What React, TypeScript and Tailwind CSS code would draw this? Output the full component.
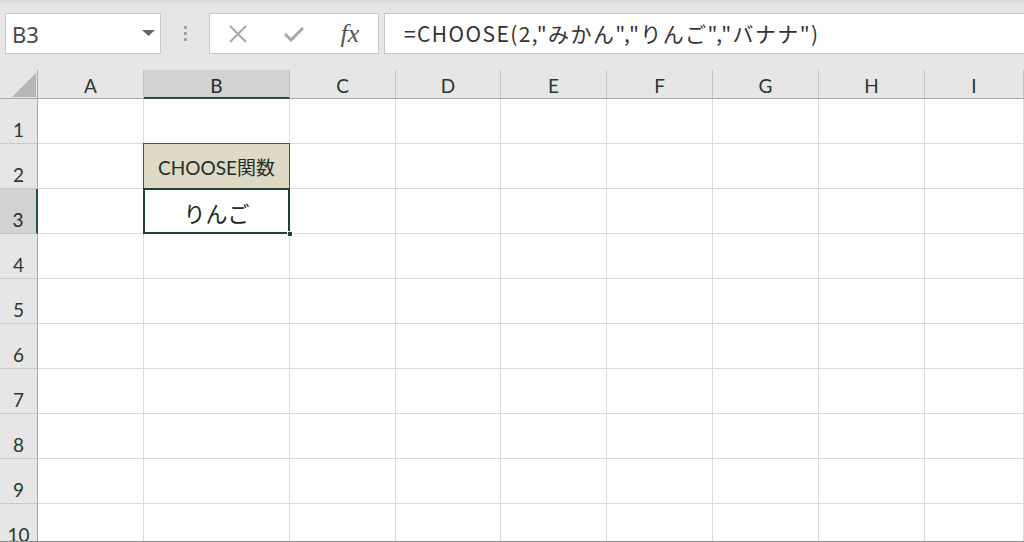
import React from "react";

const columns = ["A", "B", "C", "D", "E", "F", "G", "H", "I"];
const rows = [1, 2, 3, 4, 5, 6, 7, 8, 9, 10];

const uiFont = { fontFamily: '"Lato", "Noto Sans CJK JP", sans-serif' };
const jpFont = { fontFamily: '"Noto Sans CJK JP", sans-serif' };

function ColumnHeader({ label }: { label: string }) {
  const selected = label === "B";
  return (
    <div
      className={
        selected
          ? "flex h-[29px] items-center justify-center border-r border-r-[#bdbdbd] border-b-2 border-b-[#21553a] bg-[#d2d2d2] pt-[5px] text-[19px] text-[#1e2e26]"
          : "flex h-[29px] items-center justify-center border-r border-r-[#c4c4c4] border-b border-b-[#a9a9a9] bg-[#e6e6e6] pt-[4px] text-[19px] text-[#2a3630]"
      }
    >
      {label}
    </div>
  );
}

function RowHeader({ n }: { n: number }) {
  const selected = n === 3;
  return (
    <div
      className={
        selected
          ? "flex h-[45px] items-end justify-center border-r-2 border-r-[#21553a] border-b border-b-[#bdbdbd] bg-[#d2d2d2] text-[19px] leading-[26px] text-[#1e2e26]"
          : "flex h-[45px] items-end justify-center border-r border-r-[#a9a9a9] border-b border-b-[#c9c9c9] bg-[#e6e6e6] text-[19px] leading-[26px] text-[#2a3630]"
      }
    >
      {n}
    </div>
  );
}

function Cell({ row, col }: { row: number; col: string }) {
  if (row === 2 && col === "B") {
    return (
      <div className="relative flex h-[45px] items-center justify-center border-r border-b border-[#dadada] bg-[#ddd9c4] pt-[4px] text-[19px] text-[#1f2d26]">
        <div className="pointer-events-none absolute -top-px -left-px -right-px -bottom-px border border-[#4a524d]" />
        CHOOSE関数
      </div>
    );
  }
  if (row === 3 && col === "B") {
    return (
      <div
        className="relative flex h-[45px] items-center justify-center border-r border-b border-[#dadada] bg-white pt-[3px] text-[22px] text-[#1a2620]"
        style={jpFont}
      >
        <div className="pointer-events-none absolute -top-px -left-px -right-px -bottom-px border-2 border-[#233f30]" />
        <div className="absolute -right-[4px] -bottom-[4px] h-[6px] w-[6px] border border-white bg-[#233f30]" />
        りんご
      </div>
    );
  }
  return <div className="h-[45px] border-r border-b border-[#dadada] bg-white" />;
}

export default function App() {
  return (
    <div className="h-[542px] w-[1024px] overflow-hidden bg-[#e6e6e6]" style={uiFont}>
      {/* toolbar */}
      <div className="flex h-[70px] items-start border-t-[3px] border-[#dcdcdc] pt-[10px]">
        <div
          className="ml-[5px] flex h-[41px] w-[156px] items-center justify-between border border-[#c8c8c8] bg-white pr-[5px] pl-[6px] text-[22px] text-[#4a4a4a]"
          style={{ fontFamily: '"Noto Sans", sans-serif' }}
        >
          <span className="pt-[1px]">B3</span>
          <svg width="13" height="7" viewBox="0 0 13 7">
            <polygon points="0,0 13,0 6.5,6" fill="#666" />
          </svg>
        </div>
        <div className="flex h-[41px] w-[48px] flex-col items-center justify-center gap-[3px]">
          <span className="h-[3px] w-[3px] bg-[#a3a3a3]" />
          <span className="h-[3px] w-[3px] bg-[#a3a3a3]" />
          <span className="h-[3px] w-[3px] bg-[#a3a3a3]" />
        </div>
        <div className="flex h-[41px] w-[170px] items-center border border-[#c8c8c8] bg-white">
          <div className="flex w-[56px] justify-center">
            <svg width="18" height="18" viewBox="0 0 18 18">
              <path d="M1 1 L17 17 M17 1 L1 17" stroke="#a8a8a8" strokeWidth="2" fill="none" />
            </svg>
          </div>
          <div className="flex w-[56px] justify-center">
            <svg width="20" height="16" viewBox="0 0 20 16">
              <path d="M1 8 L7 14 L19 2" stroke="#a8a8a8" strokeWidth="3" fill="none" />
            </svg>
          </div>
          <div
            className="flex w-[56px] justify-center text-[26px] italic text-[#555]"
            style={{ fontFamily: '"Liberation Serif", serif' }}
          >
            fx
          </div>
        </div>
        <div
          className="ml-[5px] flex h-[41px] flex-1 items-center border-y border-l border-[#c8c8c8] bg-white pl-[19px] text-[21px] tracking-[1.4px] text-[#333]"
          style={jpFont}
        >
          =CHOOSE(2,"みかん","りんご","バナナ")
        </div>
      </div>

      {/* sheet grid */}
      <div className="h-[472px] overflow-hidden border-b border-[#8c8c8c] bg-white">
        <div className="grid grid-cols-[38px_106px_146px_106px_105px_106px_106px_106px_106px_1fr]">
          <div className="flex h-[29px] items-end justify-end border-r border-b border-[#a9a9a9] bg-[#e6e6e6] pr-[1px] pb-[1px]">
            <svg width="24" height="24" viewBox="0 0 24 24">
              <polygon points="0,24 24,0 24,24" fill="#b6b6b6" />
            </svg>
          </div>
          {columns.map((c) => (
            <ColumnHeader key={c} label={c} />
          ))}
          {rows.map((r) => (
            <React.Fragment key={r}>
              <RowHeader n={r} />
              {columns.map((c) => (
                <Cell key={c} row={r} col={c} />
              ))}
            </React.Fragment>
          ))}
        </div>
      </div>
    </div>
  );
}
